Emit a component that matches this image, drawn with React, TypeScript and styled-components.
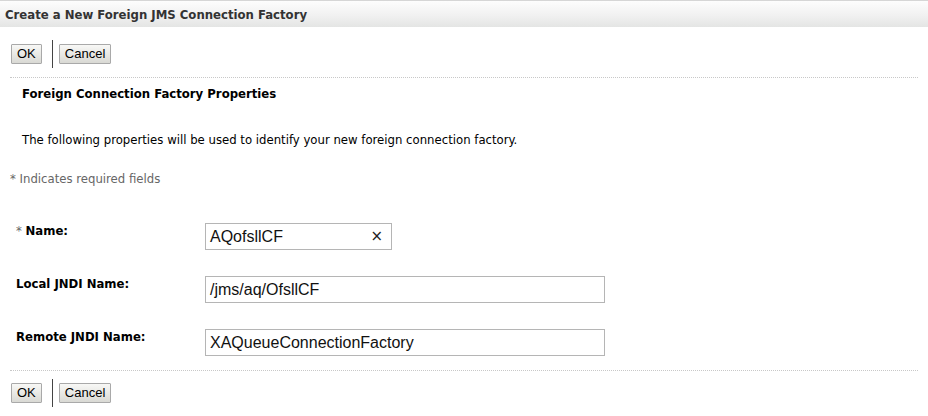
import styled, { createGlobalStyle } from "styled-components";

const GlobalStyle = createGlobalStyle`
  html, body {
    margin: 0;
    padding: 0;
    background: #ffffff;
  }
  body {
    font-family: "DejaVu Sans Condensed", "DejaVu Sans", sans-serif;
    font-size: 13px;
    color: #000;
  }
`;

const Page = styled.div`
  width: 928px;
  height: 416px;
  overflow: hidden;
`;

const TitleBar = styled.header`
  height: 26px;
  border-top: 1px solid #d6d6d6;
  background: linear-gradient(#fdfdfd, #f1f1f1 55%, #e4e5e4);
  display: flex;
  align-items: center;
  padding-left: 5px;
`;

const Title = styled.h1`
  margin: 0;
  font: bold 13px "DejaVu Sans Condensed", "DejaVu Sans", sans-serif;
  color: #333;
`;

const Toolbar = styled.div<{ $top: number }>`
  display: flex;
  align-items: center;
  height: 28px;
  margin-top: ${(p) => p.$top}px;
  padding-left: 11px;
`;

const Button = styled.button`
  height: 20px;
  padding: 0 5px;
  border: 1px solid #a9a9a9;
  border-radius: 1px;
  background: linear-gradient(#f8f8f6, #e6e6e2 60%, #d9d9d4);
  font: 13px "Liberation Sans", Arial, sans-serif;
  color: #000;
  line-height: 18px;
`;

const Divider = styled.span`
  width: 1px;
  height: 28px;
  background: #444;
  margin: 0 6px 0 10px;
`;

const DottedRule = styled.div<{ $top: number }>`
  margin: ${(p) => p.$top}px 10px 0 10px;
  border-top: 1px dotted #c8c8c8;
`;

const SectionTitle = styled.h2`
  margin: 8px 0 0 22px;
  font: bold 13px/16px "DejaVu Sans Condensed", "DejaVu Sans", sans-serif;
  color: #000;
`;

const Description = styled.p`
  margin: 30px 0 0 22px;
  line-height: 16px;
`;

const RequiredNote = styled.p`
  margin: 23px 0 0 10px;
  line-height: 16px;
  color: #666;
`;

const Form = styled.div`
  margin-top: 36px;
  display: flex;
  flex-direction: column;
  gap: 26px;
`;

const Row = styled.div`
  display: grid;
  grid-template-columns: 189px auto;
  align-items: start;
  padding-left: 16px;
  height: 27px;
`;

const Label = styled.label`
  font-weight: bold;
  line-height: 16px;
`;

const Star = styled.span`
  color: #666;
  font-weight: normal;
`;

const Field = styled.div<{ $width: number }>`
  position: relative;
  width: ${(p) => p.$width}px;
  height: 27px;
  box-sizing: border-box;
  border: 1px solid #b5b5b5;
  display: flex;
  align-items: center;
  padding-left: 4px;
  font: 16px "Liberation Sans", Arial, sans-serif;
  color: #111;
`;

const Clear = styled.span`
  position: absolute;
  right: 8px;
  top: 5px;
  font: 15px "DejaVu Sans", sans-serif;
  line-height: 15px;
  color: #222;
`;

const fields = [
  { label: "Name:", value: "AQofsllCF", width: 187, required: true },
  { label: "Local JNDI Name:", value: "/jms/aq/OfsllCF", width: 400 },
  { label: "Remote JNDI Name:", value: "XAQueueConnectionFactory", width: 400 },
];

function ButtonBar({ top }: { top: number }) {
  return (
    <Toolbar $top={top}>
      <Button>OK</Button>
      <Divider />
      <Button>Cancel</Button>
    </Toolbar>
  );
}

export default function App() {
  return (
    <Page>
      <GlobalStyle />
      <TitleBar>
        <Title>Create a New Foreign JMS Connection Factory</Title>
      </TitleBar>
      <ButtonBar top={13} />
      <DottedRule $top={9} />
      <SectionTitle>Foreign Connection Factory Properties</SectionTitle>
      <Description>
        The following properties will be used to identify your new foreign connection factory.
      </Description>
      <RequiredNote>* Indicates required fields</RequiredNote>
      <Form>
        {fields.map((f) => (
          <Row key={f.label}>
            <Label>
              {f.required && <Star>* </Star>}
              {f.label}
            </Label>
            <Field $width={f.width}>
              {f.value}
              {f.required && <Clear>×</Clear>}
            </Field>
          </Row>
        ))}
      </Form>
      <DottedRule $top={14} />
      <ButtonBar top={8} />
    </Page>
  );
}
